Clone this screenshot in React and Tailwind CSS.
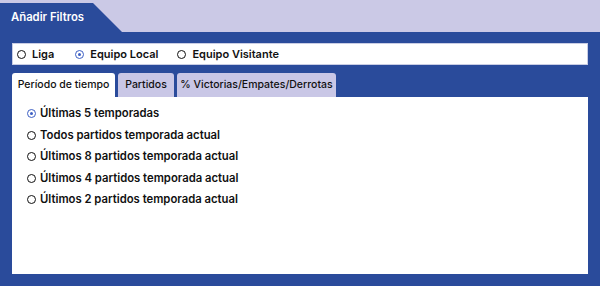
export default function App() {
  const Radio = ({ checked }) => (
    <span
      className={
        "inline-flex items-center justify-center w-[9px] h-[9px] rounded-full border-[1.5px] shrink-0 " +
        (checked ? "border-[#3d5fc4]" : "border-[#111]")
      }
    >
      {checked && <span className="w-[3px] h-[3px] rounded-full bg-[#3d5fc4]" />}
    </span>
  );
  const items = [
    ["Últimas 5 temporadas", true],
    ["Todos partidos temporada actual", false],
    ["Últimos 8 partidos temporada actual", false],
    ["Últimos 4 partidos temporada actual", false],
    ["Últimos 2 partidos temporada actual", false],
  ];
  return (
    <div
      className="w-[600px] h-[286px] bg-[#cbc9e6] pt-[3px] overflow-hidden"
      style={{ fontFamily: "Inter, 'Open Sans', sans-serif" }}
    >
      <div className="w-[122px] h-[29px] bg-[#2a4b9b] [clip-path:polygon(0_0,93px_0,122px_100%,0_100%)] flex items-center pl-[11px] pb-[1px]">
        <span className="text-white text-[11.3px] font-semibold">Añadir Filtros</span>
      </div>
      <div className="w-[597px] h-[252px] bg-[#2a4b9b] border-r border-b border-[#8e9fcf] box-content px-[12px] pt-[11px] box-border flex flex-col">
        <div className="h-[22px] w-[576px] bg-white border border-[#c9cde4] flex items-center pl-[4px] text-[11px] font-semibold text-[#111]">
          <label className="flex items-center gap-[6px]"><Radio /> Liga</label>
          <label className="flex items-center gap-[6px] ml-[21px]"><Radio checked /> Equipo Local</label>
          <label className="flex items-center gap-[6px] ml-[19px]"><Radio /> Equipo Visitante</label>
        </div>
        <div className="flex mt-[8px] h-[24px] gap-[3px] text-[10.5px] font-medium text-[#111]">
          <div className="w-[103px] bg-white rounded-t-[3px] flex items-center justify-center">Período de tiempo</div>
          <div className="w-[56px] bg-[#c9c7e6] rounded-t-[3px] flex items-center justify-center">Partidos</div>
          <div className="w-[159px] bg-[#c9c7e6] rounded-t-[3px] flex items-center justify-center">% Victorias/Empates/Derrotas</div>
        </div>
        <div className="w-[576px] h-[177px] bg-white pl-[15px] pt-[6px] flex flex-col">
          {items.map(([t, c]) => (
            <label key={t} className="flex items-center gap-[4px] h-[21.5px] text-[11.3px] font-semibold text-[#111]">
              <Radio checked={c} /> {t}
            </label>
          ))}
        </div>
      </div>
    </div>
  );
}
